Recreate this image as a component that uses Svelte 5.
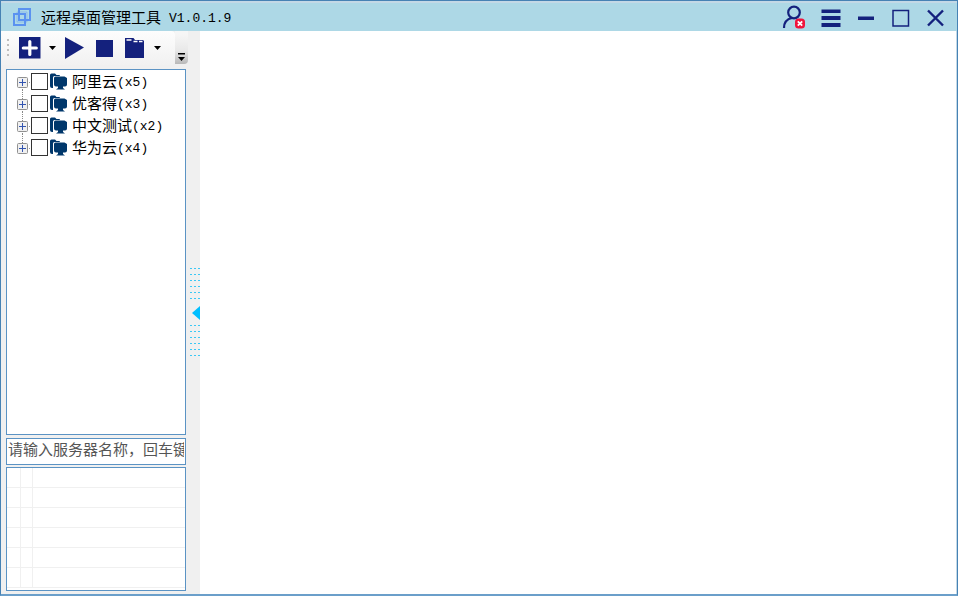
<script>
  let groups = $state([
    { name: '阿里云', count: 5, checked: false },
    { name: '优客得', count: 3, checked: false },
    { name: '中文测试', count: 2, checked: false },
    { name: '华为云', count: 4, checked: false }
  ]);
  let query = $state('');
  let collapsed = $state(false);
  const rows = [1, 2, 3, 4, 5, 6];
</script>

<div class="window">
  <header class="titlebar">
    <svg class="logo" width="20" height="20" viewBox="0 0 20 20" fill="none" stroke="#5b92f0" stroke-width="2">
      <path d="M7 2H18V13H7Z M2 7H13V18H2Z" />
      <path d="M5 5V15H15V5Z" stroke-width="1" opacity=".4" />
    </svg>
    <h1>远程桌面管理工具<span class="latin version">V1.0.1.9</span></h1>
    <div class="actions">
      <button class="user" aria-label="用户">
        <svg width="24" height="24" viewBox="0 0 24 24" fill="none" stroke="#14217d" stroke-width="2.2">
          <circle cx="12" cy="7.5" r="5.8" />
          <path d="M2 23C2 17 5 14 10 13" />
          <rect x="13" y="13.500" width="10" height="10" rx="3.500" fill="#f0143c" stroke="none" />
          <path d="M15.800 16.300L20.200 20.700M20.200 16.300L15.800 20.700" stroke="#fff" stroke-width="1.800" />
        </svg>
      </button>
      <button aria-label="菜单">
        <svg width="24" height="24" viewBox="0 0 24 24" fill="#14217d">
          <path d="M2.500 4.500H21.500V8H2.500ZM2.500 11H21.500V15H2.500ZM2.500 18H21.500V22H2.500Z" />
        </svg>
      </button>
      <button aria-label="最小化">
        <svg width="24" height="24" viewBox="0 0 24 24" fill="#14217d"><path d="M4 11.500H20V15H4Z" /></svg>
      </button>
      <button aria-label="最大化">
        <svg width="24" height="24" viewBox="0 0 24 24" fill="none" stroke="#14217d" stroke-width="1.500">
          <rect x="4" y="5.500" width="15.500" height="15.500" />
        </svg>
      </button>
      <button aria-label="关闭">
        <svg width="24" height="24" viewBox="0 0 24 24" fill="none" stroke="#14217d" stroke-width="2.400">
          <path d="M4 5.500L19 20.500M19 5.500L4 20.500" />
        </svg>
      </button>
    </div>
  </header>

  <div class="body">
    {#if !collapsed}
      <aside>
        <div class="toolbar">
          <div class="strip">
            <i class="grip"></i>
            <button aria-label="新增">
              <svg width="22" height="22" viewBox="0 0 22 22">
                <rect width="21.500" height="21.500" fill="#14217d" />
                <path d="M10.800 4.500V17.500M4.300 11H17.300" stroke="#fff" stroke-width="3.200" stroke-linecap="round" />
              </svg>
            </button>
            <button class="drop" aria-label="新增选项"><svg width="7" height="4"><path d="M0 0H7L3.500 4Z" /></svg></button>
            <button aria-label="连接">
              <svg width="19" height="22" viewBox="0 0 19 22"><path d="M0 0L19 10.500L0 22Z" fill="#14217d" /></svg>
            </button>
            <button class="stop" aria-label="断开">
              <svg width="17" height="17"><rect width="17" height="17" fill="#14217d" /></svg>
            </button>
            <button aria-label="分组">
              <svg width="19" height="20" viewBox="0 0 19 20">
                <path d="M0 0H8.500L10 2H18L19 3V20H0Z" fill="#14217d" />
                <path d="M1.500 2H6.500M8.500 3.500H12.500M14 3.500H17.500" stroke="#fff" stroke-width="1.300" />
              </svg>
            </button>
            <button class="drop last" aria-label="分组选项"><svg width="7" height="4"><path d="M0 0H7L3.500 4Z" /></svg></button>
          </div>
          <button class="more" aria-label="更多">
            <svg width="7" height="8"><path d="M0 0H7V1.500H0ZM0 4H7L3.500 8Z" /></svg>
          </button>
        </div>

        <ul class="tree">
          {#each groups as g}
            <li>
              <button class="expander" aria-label="展开{g.name}">
                <svg width="11" height="11" viewBox="0 0 11 11">
                  <rect x=".5" y=".5" width="10" height="10" rx="1" fill="#f0f0f0" stroke="#919191" />
                  <path d="M2 5.500H9M5.500 2V9" stroke="#3355b0" />
                </svg>
              </button>
              <label>
                <input type="checkbox" bind:checked={g.checked} />
                <svg width="17" height="17" viewBox="0 0 17 17" fill="#00376b">
                  <path d="M0 2Q0 .5 1.500 .5H5L6.500 2H9Q10 2 10 3H4.500Q3 3 3 4.500V15H2Q0 15 0 13Z" />
                  <path d="M4 5Q4 3.500 5.500 3.500H14.500L17 5V11.500Q17 13.500 15 13.500H13V15L15 16.500H6L8 15V13.500H6Q4 13.500 4 11.500Z" />
                </svg>
                <span class="name">{g.name}<span class="latin">(x{g.count})</span></span>
              </label>
            </li>
          {/each}
        </ul>

        <input class="search" type="text" aria-label="搜索服务器" placeholder="请输入服务器名称，回车键搜索" bind:value={query} />

        <div class="grid">
          <table aria-label="服务器信息">
            <colgroup><col class="c1" /><col class="c2" /><col /></colgroup>
            <tbody>
              {#each rows as r (r)}
                <tr><td></td><td></td><td></td></tr>
              {/each}
            </tbody>
          </table>
        </div>
      </aside>
    {/if}

    <button class="splitter" aria-label="收起侧栏" onclick={() => (collapsed = !collapsed)}>
      <i class="dots"></i>
      <svg width="8" height="14"><path d="M8 0V14L0 7Z" fill="#00bfff" /></svg>
      <i class="dots"></i>
    </button>
    <main></main>
  </div>
</div>

<style>
  .window {
    box-sizing: border-box;
    height: 100vh;
    display: flex;
    flex-direction: column;
    border: 1px solid #4682b4;
    border-bottom: 2px solid #6b9fca;
    background: #fff;
    font-family: "Noto Sans CJK SC", sans-serif;
    font-size: 15px;
    color: #000;
  }
  button {
    padding: 0;
    border: 0;
    background: none;
    display: flex;
    align-items: center;
    justify-content: center;
  }
  svg {
    display: block;
    flex: none;
  }
  .latin {
    font-family: "Liberation Mono", monospace;
    font-size: 13px;
    line-height: 1;
    vertical-align: 1px;
  }
  .version {
    margin-left: 8px;
  }
  .titlebar {
    height: 28px;
    flex: none;
    display: flex;
    align-items: center;
    padding: 0 9px 0 11px;
    border-top: 2px solid #c3d8e6;
    background: #add8e6;
  }
  h1 {
    margin: 0 0 0 9px;
    font-size: 15px;
    font-weight: 400;
    line-height: 24px;
    white-space: nowrap;
  }
  .actions {
    display: flex;
    gap: 11px;
    margin-left: auto;
  }
  .user {
    margin-right: 2px;
  }
  .body {
    flex: 1;
    min-height: 0;
    display: flex;
  }
  aside {
    width: 187px;
    flex: none;
    display: flex;
    flex-direction: column;
    background: #f0f0f0;
    padding-bottom: 3px;
  }
  .toolbar {
    height: 38px;
    flex: none;
    display: flex;
    align-items: flex-start;
  }
  .strip {
    flex: 1;
    height: 34px;
    display: flex;
    align-items: center;
    padding-left: 6px;
    border-radius: 0 4px 4px 0;
    background: linear-gradient(#fdfdfd, #f1f1f1);
  }
  .grip {
    width: 2px;
    height: 18px;
    margin-right: 10px;
    background: repeating-linear-gradient(#bdbdbd 0 2px, transparent 2px 5px);
  }
  .drop {
    width: 7px;
    margin: 0 9px 0 8px;
  }
  .drop.last {
    margin-left: 10px;
  }
  .stop {
    margin: 0 12px;
  }
  .more {
    width: 13px;
    height: 33px;
    align-items: flex-end;
    padding-bottom: 3px;
    border-radius: 0 0 4px 0;
    background: linear-gradient(#f6f6f6 10%, #e8e8e8 60%, #b8b8b8);
  }
  .tree,
  .search,
  .grid {
    box-sizing: border-box;
    margin: 0 2px 0 5px;
    border: 1px solid #5b93c4;
    background: #fff;
  }
  .tree {
    flex: 1;
    min-height: 0;
    padding: 0 0 0 10px;
    list-style: none;
  }
  li {
    display: flex;
    align-items: center;
    height: 22px;
    background: linear-gradient(#999, #999) 12px 12px / 1px 1px no-repeat;
  }
  li:not(:last-child) .expander::after {
    content: '';
    position: absolute;
    top: 12px;
    left: 5px;
    height: 10px;
    border-left: 1px dotted #888;
  }
  .expander {
    position: relative;
    margin-top: 2px;
  }
  label {
    display: flex;
    align-items: center;
    margin-left: 3px;
    white-space: nowrap;
  }
  label input {
    appearance: none;
    box-sizing: border-box;
    width: 17px;
    height: 17px;
    margin: 0 2px 0 0;
    border: 1px solid #333;
    background: #fff;
  }
  label input:checked {
    box-shadow: inset 0 0 0 3px #fff;
    background: #333;
  }
  .name {
    margin-left: 5px;
    line-height: 22px;
  }
  .search {
    height: 27px;
    flex: none;
    margin-top: 3px;
    margin-bottom: 2px;
    padding: 0 1px 7px 1px;
    border-radius: 0;
    font: inherit;
    line-height: 18px;
    outline: none;
  }
  .search::placeholder {
    color: #555;
    opacity: 1;
  }
  .grid {
    height: 124px;
    flex: none;
    overflow: hidden;
  }
  table {
    width: 100%;
    table-layout: fixed;
    border-collapse: separate;
    border-spacing: 0;
  }
  .c1 {
    width: 14px;
  }
  .c2 {
    width: 12px;
  }
  td {
    box-sizing: border-box;
    height: 20px;
    padding: 0;
    border: solid #f0f0f0;
    border-width: 0 1px 1px 0;
  }
  td:last-child {
    border-right: 0;
  }
  .splitter {
    width: 12px;
    flex: none;
    flex-direction: column;
    align-items: flex-end;
    gap: 5px;
    background: #f0f0f0;
  }
  .dots {
    width: 10px;
    height: 33px;
    background:
      repeating-linear-gradient(transparent 0 1px, #f0f0f0 1px 6px),
      linear-gradient(90deg, #3cc8f5 50%, #f0f0f0 50%) 0 0 / 4px 100%;
  }
  main {
    flex: 1;
    min-width: 0;
    background: #fff;
    border-right: 1px solid #c3d8e6;
  }
  :global(body) {
    margin: 0;
  }
</style>
